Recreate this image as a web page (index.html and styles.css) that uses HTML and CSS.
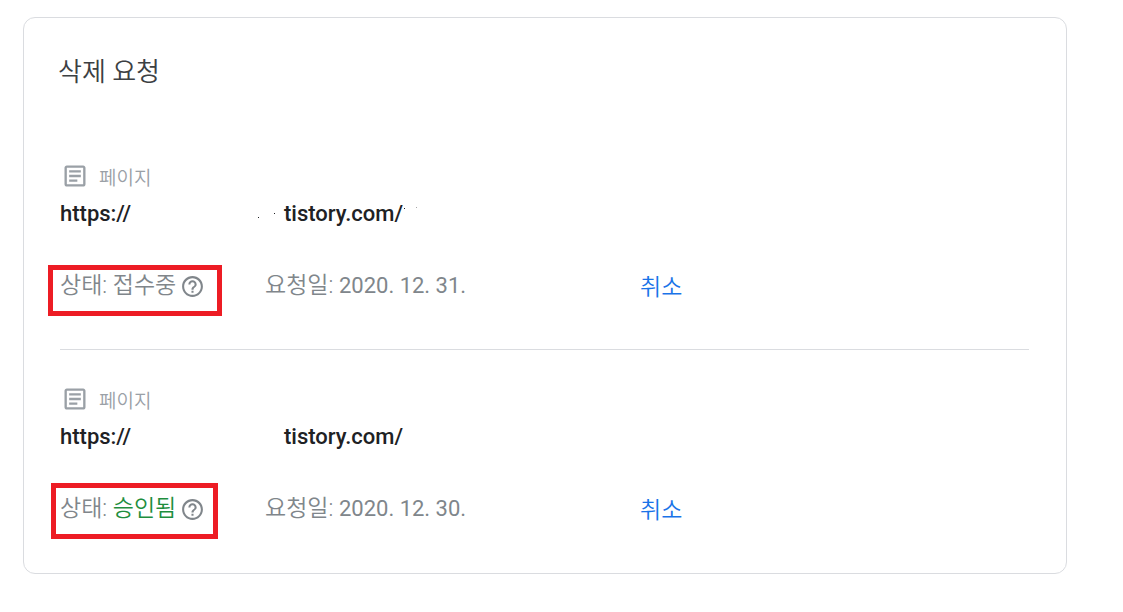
FILE: index.html
```html
<!DOCTYPE html>
<html lang="ko">
    <head>
        <meta charset="UTF-8" />
        <meta name="viewport" content="width=device-width, initial-scale=1.0" />
        <title>삭제 요청</title>
        <link rel="stylesheet" href="styles.css">
    </head>
    <body>
        <svg class="sprite" aria-hidden="true">
            <symbol id="icon-page" viewBox="0 0 24 24">
                <path d="M19 5v14H5V5h14m0-2H5c-1.1 0-2 .9-2 2v14c0 1.1.9 2 2 2h14c1.1 0 2-.9 2-2V5c0-1.1-.9-2-2-2z" />
                <path d="M14 17H7v-2h7v2zm3-4H7v-2h10v2zm0-4H7V7h10v2z" />
            </symbol>
            <symbol id="icon-help" viewBox="0 0 24 24">
                <path d="M11 18h2v-2h-2v2zm1-16C6.48 2 2 6.48 2 12s4.48 10 10 10 10-4.48 10-10S17.52 2 12 2zm0 18c-4.41 0-8-3.59-8-8s3.59-8 8-8 8 3.59 8 8-3.59 8-8 8zm0-14c-2.21 0-4 1.79-4 4h2c0-1.1.9-2 2-2s2 .9 2 2c0 2-3 1.75-3 5h2c0-2.25 3-2.5 3-5 0-2.21-1.79-4-4-4z" />
            </symbol>
        </svg>

        <main class="card">
            <h1>삭제 요청</h1>

            <section class="request">
                <div class="type">
                    <svg class="icon-page"><use href="#icon-page" /></svg>
                    <span>페이지</span>
                </div>
                <div class="url">
                    <span class="scheme">https://</span>
                    <span>tistory.com/</span>
                    <svg class="specks" viewBox="0 0 160 12" aria-hidden="true">
                        <path d="M0 10h1v1H0zM16 6h1v1h-1zM146 1h1v1h-1z" />
                        <path class="faint" d="M158 0h1v1h-1z" />
                    </svg>
                </div>
                <div class="details">
                    <div class="status marked marked-pending">
                        <span>상태: 접수중</span>
                        <button class="help" aria-label="도움말">
                            <svg><use href="#icon-help" /></svg>
                        </button>
                    </div>
                    <div>요청일: <span class="date">2020. 12. 31.</span></div>
                    <button class="cancel">취소</button>
                </div>
            </section>

            <section class="request">
                <div class="type">
                    <svg class="icon-page"><use href="#icon-page" /></svg>
                    <span>페이지</span>
                </div>
                <div class="url">
                    <span class="scheme">https://</span>
                    <span>tistory.com/</span>
                </div>
                <div class="details">
                    <div class="status marked marked-approved">
                        <span>상태: <span class="approved">승인됨</span></span>
                        <button class="help" aria-label="도움말">
                            <svg><use href="#icon-help" /></svg>
                        </button>
                    </div>
                    <div>요청일: <span class="date">2020. 12. 30.</span></div>
                    <button class="cancel">취소</button>
                </div>
            </section>
        </main>
    </body>
</html>
```
FILE: styles.css
```css
* {
    box-sizing: border-box;
}
body {
    margin: 0;
    padding: 17px 56px 38px 23px;
    background: #fff;
    color: #202124;
    font-family: Roboto, "Noto Sans CJK KR", sans-serif;
    font-size: 22px;
}
svg {
    display: block;
    fill: currentColor;
}
button {
    padding: 0;
    border: 0;
    background: none;
    font: inherit;
    cursor: pointer;
}
.sprite {
    display: none;
}
.card {
    padding: 38px 37px 1px 34px;
    border: 1px solid #dadce0;
    border-radius: 12px;
}
h1 {
    margin: 0 0 39px;
    color: #3c4043;
    font-size: 26px;
    font-weight: 350;
    line-height: 32px;
}
.request {
    margin-left: 2px;
    padding: 37px 0 45px;
    border-bottom: 1px solid #dadce0;
}
.request:last-child {
    border-bottom: 0;
}
.type {
    display: flex;
    align-items: center;
    gap: 10px;
    height: 24px;
    padding-left: 1px;
    color: #9aa0a6;
    font-size: 19px;
    font-weight: 350;
}
.icon-page {
    width: 28px;
    height: 28px;
}
.url {
    position: relative;
    display: flex;
    margin: 14px 0 42px;
    font-weight: 500;
    line-height: 24px;
}
.scheme {
    width: 224px;
}
.specks {
    position: absolute;
    top: 5px;
    left: 198px;
    width: 160px;
    height: 12px;
}
.faint {
    opacity: 0.4;
}
.details {
    display: grid;
    grid-template-columns: 205px 375px auto;
    justify-content: start;
    align-items: center;
    color: #80868b;
    font-size: 23px;
    font-weight: 350;
    line-height: 32px;
}
.date {
    font-size: 22px;
    font-weight: 400;
}
.status {
    position: relative;
    display: flex;
    align-items: center;
    gap: 4px;
    justify-self: start;
}
.help {
    color: #80868b;
}
.help svg {
    width: 25px;
    height: 25px;
}
.approved {
    color: #1e8e3e;
}
.cancel {
    padding-top: 4px;
    color: #1a73e8;
}
.marked::after {
    content: "";
    position: absolute;
    border: 5px solid #ed1c24;
    pointer-events: none;
}
.marked-pending::after {
    inset: -5px -17px -14px -12px;
}
.marked-approved::after {
    inset: -10px -13px -14px -9px;
}
```
